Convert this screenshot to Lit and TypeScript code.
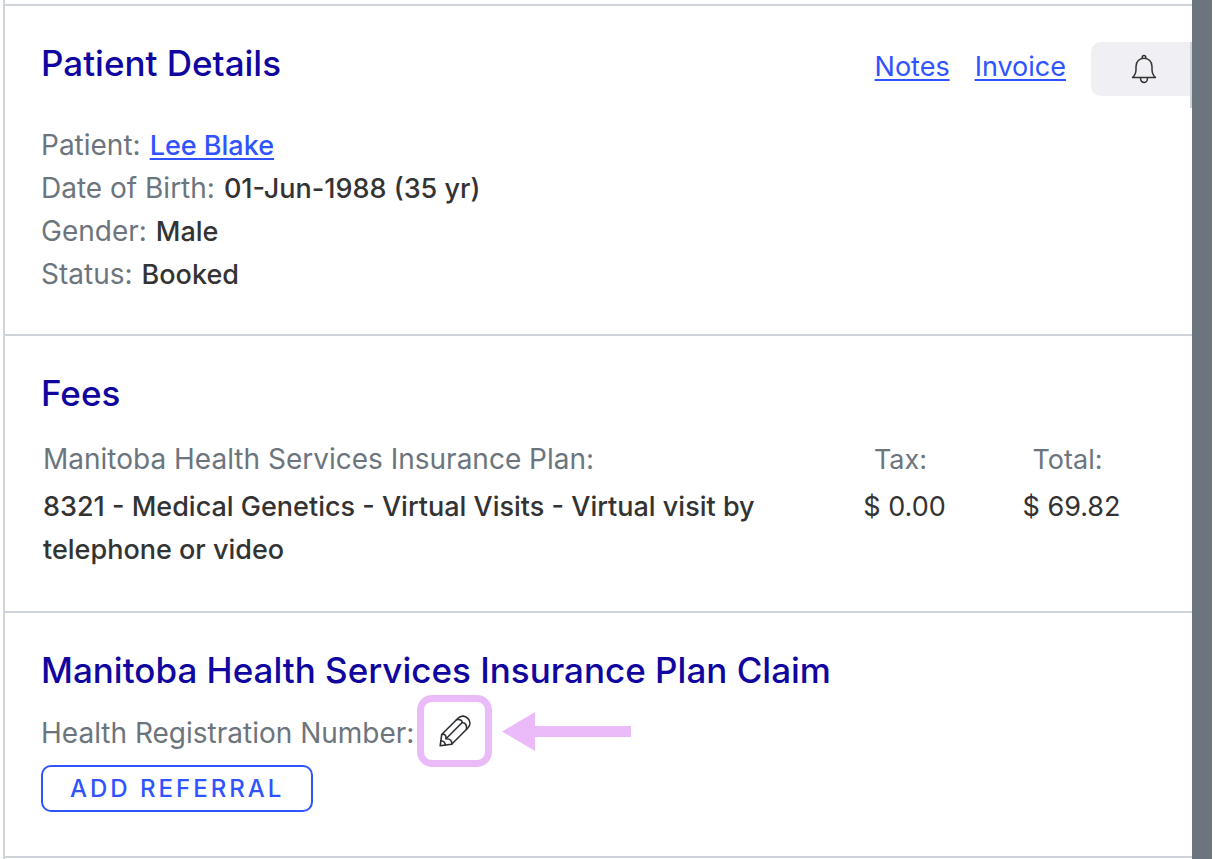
import { LitElement, html, css } from "lit";
import { customElement } from "lit/decorators.js";

interface Detail {
  label: string;
  value: string;
  href?: string;
}

interface Fee {
  plan: string;
  service: string;
  tax: string;
  total: string;
}

const details: Detail[] = [
  { label: "Patient:", value: "Lee Blake", href: "#patient" },
  { label: "Date of Birth:", value: "01-Jun-1988 (35 yr)" },
  { label: "Gender:", value: "Male" },
  { label: "Status:", value: "Booked" },
];

const fee: Fee = {
  plan: "Manitoba Health Services Insurance Plan:",
  service: "8321 - Medical Genetics - Virtual Visits - Virtual visit by telephone or video",
  tax: "$ 0.00",
  total: "$ 69.82",
};

@customElement("app-root")
export class AppRoot extends LitElement {
  static styles = css`
    :host {
      display: block;
      background: #fff;
      color: #333;
      font-family: Inter, "Noto Sans", sans-serif;
      font-size: 27px;
      line-height: 43px;
    }
    * {
      box-sizing: border-box;
    }
    .page {
      display: flex;
      min-height: 100vh;
      padding: 0 3px;
    }
    .panel {
      flex: 1;
      min-width: 0;
      padding-top: 4px;
      border-left: 2px solid #ced4da;
    }
    .edge {
      flex: none;
      width: 20px;
      background: #6c757d;
    }
    .section {
      padding: 36px 0 0 36px;
      border-top: 2px solid #ced4da;
    }
    .patient {
      padding-bottom: 38px;
    }
    .fees {
      padding-bottom: 36px;
    }
    .claim {
      padding-bottom: 44px;
      border-bottom: 2px solid #ced4da;
    }
    .title {
      margin: 0;
      color: #10069f;
      font-size: 35px;
      font-weight: 500;
      line-height: 42px;
    }
    .head {
      display: flex;
      align-items: flex-start;
      justify-content: space-between;
      margin-bottom: 16px;
    }
    .actions {
      display: flex;
      align-items: flex-start;
      gap: 25px;
      height: 66px;
      line-height: 50px;
      border-right: 2px solid #ced4da;
    }
    .link {
      color: #2f54ff;
      text-decoration: underline;
      text-decoration-thickness: 2px;
      text-underline-offset: 3px;
    }
    .bell {
      display: flex;
      align-items: center;
      justify-content: center;
      width: 99px;
      height: 54px;
      padding: 0 0 0 6px;
      border: 0;
      border-radius: 10px 0 0 10px;
      background: #f0eff4;
      color: #333;
    }
    .details {
      margin: 0;
    }
    .detail {
      display: flex;
      gap: 9px;
    }
    .label {
      color: #6c757d;
      font-size: 28px;
      font-weight: 400;
    }
    .value {
      margin: 0;
      font-weight: 500;
    }
    .table {
      width: 100%;
      margin-top: 24px;
      border-collapse: collapse;
    }
    .table th,
    .table td {
      padding: 0 0 4px 2px;
      vertical-align: top;
      text-align: left;
    }
    .table .amount {
      width: 167px;
      padding-left: 0;
      font-size: 27px;
      text-align: center;
    }
    .table th.amount {
      padding-right: 8px;
    }
    .table .last {
      width: 204px;
      padding-right: 37px;
    }
    .table th.last {
      padding-right: 45px;
    }
    .number {
      display: flex;
      align-items: center;
      margin-top: 11px;
    }
    .number .label {
      padding-top: 4px;
    }
    .edit {
      display: flex;
      align-items: center;
      justify-content: center;
      width: 61px;
      height: 58px;
      margin: 0 17px 0 10px;
      padding: 0;
      border: 0;
      border-radius: 8px;
      outline: 7px solid #ebbbf9;
      background: #fff;
      color: #2b2f33;
    }
    .add {
      display: block;
      height: 47px;
      margin-top: 5px;
      padding: 0 27px;
      border: 2px solid #2f54ff;
      border-radius: 10px;
      background: #fff;
      color: #2f54ff;
      font: 500 24px/43px Inter, "Noto Sans", sans-serif;
      letter-spacing: 3px;
      text-transform: uppercase;
    }
    svg {
      display: block;
      flex: none;
    }
  `;

  private bellIcon() {
    return html`<svg width="26" height="30" viewBox="0 0 26 30" fill="none" stroke="currentColor" stroke-width="1.5" aria-hidden="true">
      <path d="M1.5 23.6H24.5C22 21.3 21 18.8 21 15.5V12.5C21 7.6 17.6 4.2 13 4.2S5 7.6 5 12.5V15.5C5 18.8 4 21.3 1.5 23.6Z" stroke-linejoin="round" />
      <path d="M11.2 4.4V3.2A1.8 1.8 0 0 1 14.8 3.2V4.4" />
      <path d="M9.6 23.8V25A3.4 3.4 0 0 0 16.4 25V23.8" />
    </svg>`;
  }

  private pencilIcon() {
    return html`<svg width="32" height="32" viewBox="0 0 32 32" fill="none" stroke="currentColor" stroke-width="1.6" stroke-linejoin="round" stroke-linecap="round" aria-hidden="true">
      <path d="M1.2 30.8 2.7 19.5 18.7 3.5C22.3 -0.1 26.2 0.8 28.8 3.4C31.4 6 31.9 9.9 28.6 13.2L12.7 29.2Z" />
      <path d="M2.7 19.5C5.2 18.6 7.4 19.8 7 23.7C11.5 23.6 13.2 26 12.7 29.2" />
      <path d="M7 23.7 23.2 7.5" />
      <path d="M17.5 4.7C20.5 4 23.5 5.1 23.2 7.5C26.5 7.6 28.2 10.4 27.4 14.4" />
      <path d="M1.9 25.7C4.5 25.8 6.2 27.5 6.3 30.1" />
    </svg>`;
  }

  render() {
    return html`
      <main class="page">
        <div class="panel">
          <section class="section patient">
            <header class="head">
              <h2 class="title">Patient Details</h2>
              <nav class="actions">
                <a class="link" href="#notes">Notes</a>
                <a class="link" href="#invoice">Invoice</a>
                <button class="bell" type="button" aria-label="Notifications">${this.bellIcon()}</button>
              </nav>
            </header>
            <dl class="details">
              ${details.map(
                (d) => html`<div class="detail">
                  <dt class="label">${d.label}</dt>
                  <dd class="value">${d.href ? html`<a class="link" href=${d.href}>${d.value}</a>` : d.value}</dd>
                </div>`
              )}
            </dl>
          </section>

          <section class="section fees">
            <h2 class="title">Fees</h2>
            <table class="table">
              <thead>
                <tr>
                  <th class="label" scope="col">${fee.plan}</th>
                  <th class="label amount" scope="col">Tax:</th>
                  <th class="label amount last" scope="col">Total:</th>
                </tr>
              </thead>
              <tbody>
                <tr>
                  <td class="value">${fee.service}</td>
                  <td class="amount">${fee.tax}</td>
                  <td class="amount last">${fee.total}</td>
                </tr>
              </tbody>
            </table>
          </section>

          <section class="section claim">
            <h2 class="title">Manitoba Health Services Insurance Plan Claim</h2>
            <div class="number">
              <span class="label">Health Registration Number:</span>
              <button class="edit" type="button" aria-label="Edit health registration number">${this.pencilIcon()}</button>
              <svg class="arrow" width="129" height="39" viewBox="0 0 129 39" aria-hidden="true">
                <path d="M0 19.5 33 0V14H129V25H33V39Z" fill="#ebbbf9" />
              </svg>
            </div>
            <button class="add" type="button">Add Referral</button>
          </section>
        </div>
        <div class="edge"></div>
      </main>
    `;
  }
}
